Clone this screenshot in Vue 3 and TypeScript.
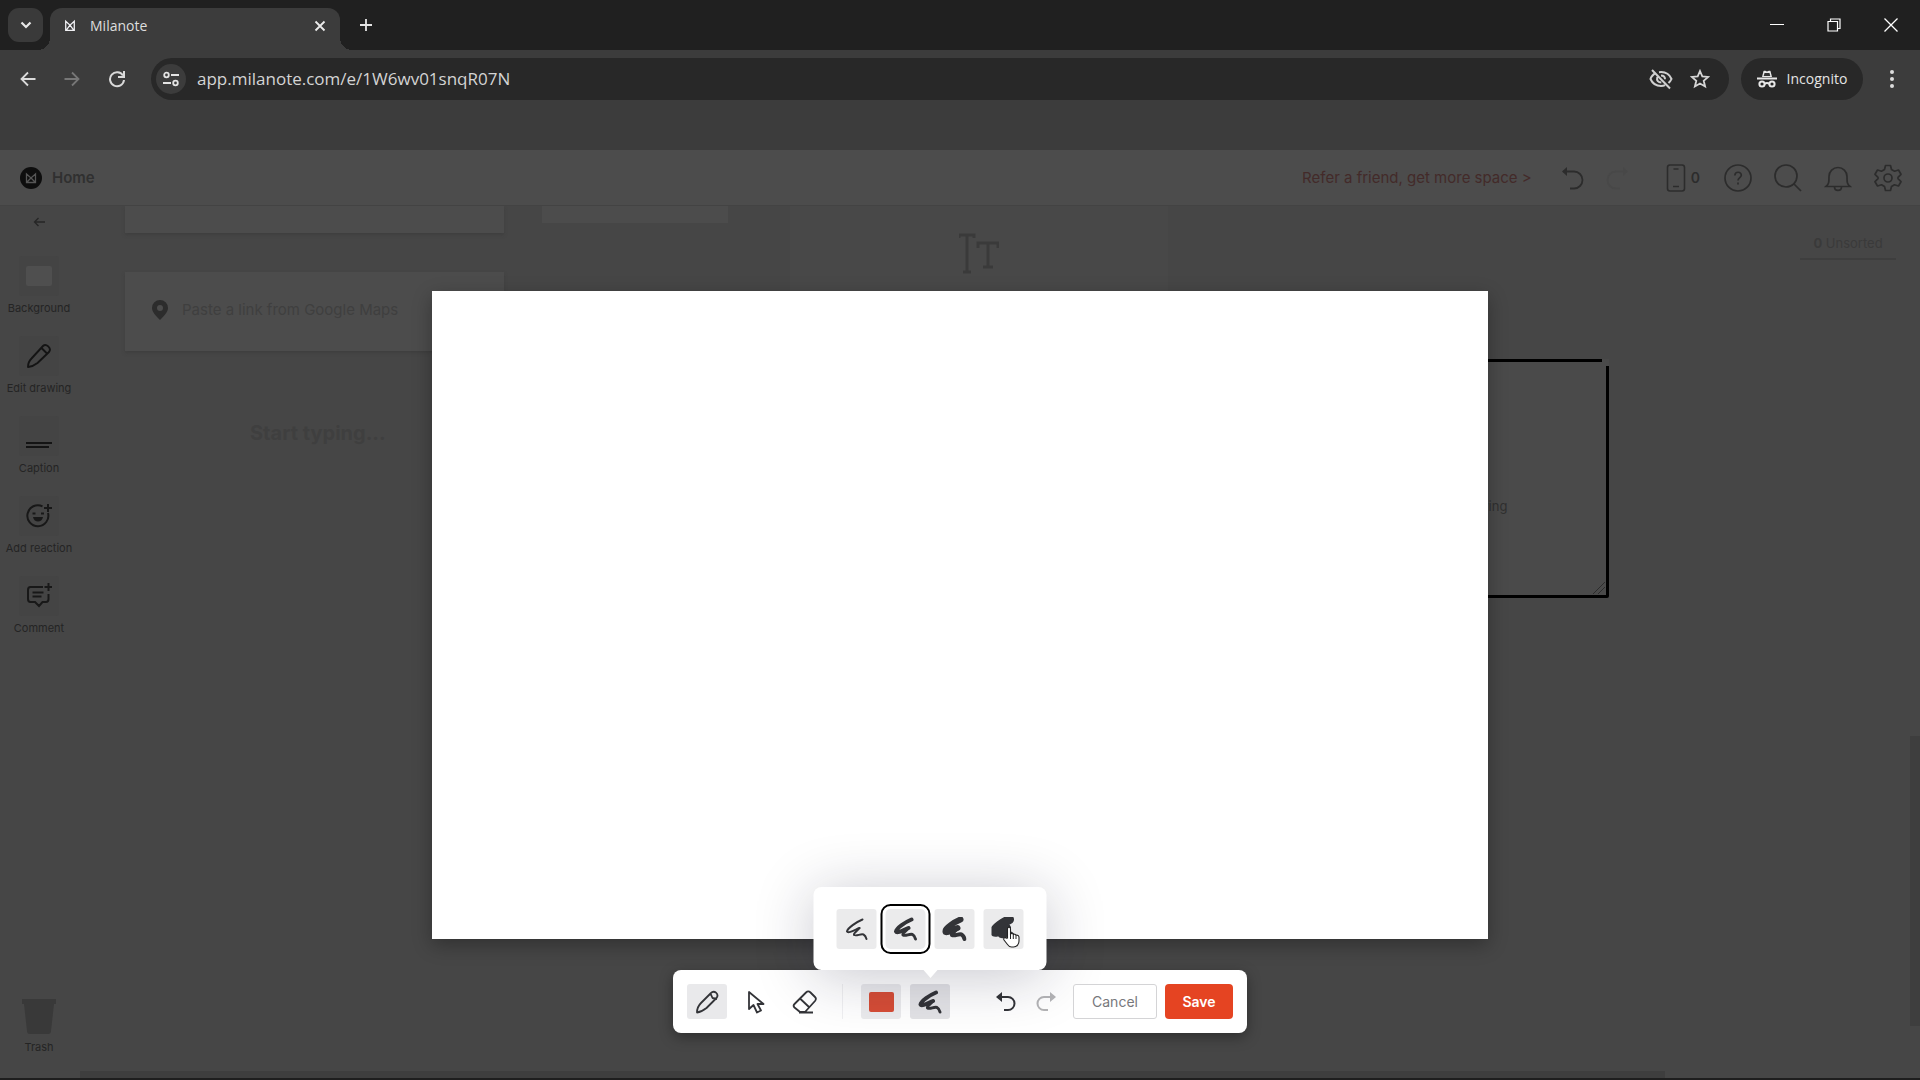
<script setup lang="ts">
import { ref } from 'vue'

interface StrokeSize {
  name: string
  main: number
  tail: number
}

const strokeSizes: StrokeSize[] = [
  { name: 'Thin', main: 2, tail: 2 },
  { name: 'Medium', main: 4, tail: 3 },
  { name: 'Thick', main: 6, tail: 4 },
  { name: 'Extra thick', main: 9, tail: 6 },
]

const strokeUpper = 'M18 2.500C12 5 3 11 2.500 14.500C3.500 17 11 12.500 15 11'
const strokeLower = 'M15 11C13 14 8.500 16 9.500 18C12 19.500 16 16.500 19 17.500C21 18.500 21.500 20 22 22'

const url = ref('app.milanote.com/e/1W6wv01snqR07N')
const selectedSize = ref('Medium')
const tool = ref('pencil')
</script>

<template>
  <div class="window">
    <header class="chrome">
      <div class="tabstrip">
        <button class="tab-search" aria-label="Search tabs">
          <svg width="12" height="8" viewBox="0 0 12 8"><path d="M1.5 1.5 6 6l4.500-4.500" stroke="#e8e8e8" stroke-width="2.200" fill="none" /></svg>
        </button>
        <div class="tab">
          <svg class="favicon" width="12" height="14" viewBox="0 0 14 14"><path d="M2 1.500 7 6l5-4.500V12H2ZM2.500 12 7 6l4.500 6" stroke="#f0f0f4" stroke-width="1.500" fill="none" /></svg>
          <span class="tab-title">Milanote</span>
          <button class="plain" aria-label="Close tab">
            <svg width="12" height="12" viewBox="0 0 12 12"><path d="m1.500 1.500 9 9m0-9-9 9" stroke="#ececec" stroke-width="1.800" /></svg>
          </button>
        </div>
        <button class="plain new-tab" aria-label="New tab">
          <svg width="14" height="14" viewBox="0 0 14 14"><path d="M7 1v12M1 7h12" stroke="#e4e4e4" stroke-width="1.800" /></svg>
        </button>
        <div class="window-controls">
          <button class="plain" aria-label="Minimize"><svg width="14" height="14" viewBox="0 0 14 14"><path d="M0 6.500h14" stroke="#fff" /></svg></button>
          <button class="plain" aria-label="Restore"><svg width="14" height="14" viewBox="0 0 14 14"><path d="M1 3.500h9.500V13H1zM3.500 3V1H13v9.500h-2" stroke="#fff" stroke-width="1.200" fill="none" /></svg></button>
          <button class="plain" aria-label="Close"><svg width="14" height="14" viewBox="0 0 14 14"><path d="m.5.5 13 13m0-13-13 13" stroke="#fff" stroke-width="1.300" /></svg></button>
        </div>
      </div>

      <div class="addressbar">
        <div class="nav">
          <button class="plain" aria-label="Back"><svg width="16" height="16" viewBox="0 0 16 16"><path d="M15.500 8H1.500M8 1.500 1.500 8 8 14.500" stroke="#dadada" stroke-width="1.800" fill="none" /></svg></button>
          <button class="plain" aria-label="Forward"><svg width="16" height="16" viewBox="0 0 16 16"><path d="M.5 8h14M8 1.500 14.500 8 8 14.500" stroke="#777" stroke-width="1.800" fill="none" /></svg></button>
          <button class="plain" aria-label="Reload"><svg width="18" height="18" viewBox="0 0 18 18"><path d="M15 5.500A7 7 0 1 0 16 10" stroke="#dadada" stroke-width="2" fill="none" /><path d="M16 1v6h-6" stroke="#dadada" stroke-width="2" fill="none" /></svg></button>
        </div>
        <div class="omnibox">
          <button class="site-info" aria-label="Site information">
            <svg width="16" height="16" viewBox="0 0 16 16" fill="none" stroke="#e4e4e4" stroke-width="1.800"><circle cx="3.500" cy="4" r="2.300" /><path d="M8 4h8M0 12h8" /><circle cx="12.500" cy="12" r="2.300" /></svg>
          </button>
          <input v-model="url" class="url" type="text" aria-label="Address" />
          <button class="plain" aria-label="Third-party cookies blocked">
            <svg width="24" height="22" viewBox="0 0 24 22" fill="none" stroke="#cfcfcf" stroke-width="2"><path d="M7 5C4 6.500 2 9 1.500 11c2 4.500 6 7 10.500 7 1.500 0 3-.3 4-.8M10 4.200c6-.8 10.500 2.300 12.500 6.800-.6 1.500-1.500 2.700-3 4M3 2l18 18.500M12 7.500c2.500 0 4 1.500 4 3.700M8.300 9c-1 3.500 1 5.500 4 5.500" /></svg>
          </button>
          <button class="plain" aria-label="Bookmark this tab">
            <svg width="20" height="20" viewBox="0 0 20 20"><path d="m10 2 2.300 5.400 5.900.5-4.500 3.900 1.400 5.700-5.100-3-5.100 3 1.400-5.700-4.500-3.900 5.900-.5Z" fill="none" stroke="#d6d6d6" stroke-width="1.800" /></svg>
          </button>
        </div>
        <button class="incognito">
          <svg width="20" height="18" viewBox="0 0 20 18"><path d="M5 7 6.500 1c2-.6 2.500.5 3.500.5S12 .4 13.500 1L15 7Z" fill="#e8e8e8" /><path d="M7.500 3h5l.8 3H6.700Z" fill="#333" /><path d="M0 8.500h20" stroke="#e8e8e8" stroke-width="2" /><g fill="none" stroke="#e8e8e8" stroke-width="2"><circle cx="5" cy="14" r="2.600" /><circle cx="15" cy="14" r="2.600" /><path d="M7.500 14c1.500-1.200 3.500-1.200 5 0" /></g></svg>
          <span>Incognito</span>
        </button>
        <button class="plain menu" aria-label="Chrome menu">
          <svg width="6" height="20" viewBox="0 0 6 20" fill="#dcdcdc"><circle cx="3" cy="3" r="2" /><circle cx="3" cy="10" r="2" /><circle cx="3" cy="17" r="2" /></svg>
        </button>
      </div>
    </header>

    <main class="app">
      <header class="app-header">
        <a class="home" href="#">
          <svg width="22" height="22" viewBox="0 0 22 22"><circle cx="11" cy="11" r="11" fill="#0e0e0e" /><path d="m6.500 7 4.500 4 4.500-4v8.500h-9Zm0 8.500L11 11l4.500 4.500" stroke="#565656" stroke-width="1.300" fill="none" /></svg>
          <span>Home</span>
        </a>
        <a class="refer" href="#">Refer a friend, get more space &gt;</a>
        <div class="header-icons">
          <button class="plain" aria-label="Undo"><svg width="24" height="26" viewBox="0 0 24 26" fill="none" stroke="#2c2c2c" stroke-width="1.800"><path d="M3 6.500h11a8.500 8.500 0 0 1 0 17h-4" /><path d="m7 2-5 4.500L7 11Z" fill="#2c2c2c" stroke="none" /></svg></button>
          <button class="plain" aria-label="Redo"><svg width="24" height="26" viewBox="0 0 24 26" fill="none" stroke="#484848" stroke-width="1.800"><path d="M21 6.500H10a8.500 8.500 0 0 0 0 17h4" /><path d="m17 2 5 4.500-5 4.500Z" fill="#484848" stroke="none" /></svg></button>
          <button class="plain phone">
            <svg width="20" height="28" viewBox="0 0 20 28" fill="none" stroke="#2c2c2c" stroke-width="1.600"><rect x="1.500" y="1" width="17" height="26" rx="2.500" /><path d="M7.500 5h5M7 22.500h6" /></svg>
            <span>0</span>
          </button>
          <button class="plain" aria-label="Help"><svg width="28" height="28" viewBox="0 0 28 28" fill="none" stroke="#2c2c2c" stroke-width="1.700"><circle cx="14" cy="14" r="13" /><path d="M10.800 11.500c.3-4.500 6.700-4 6.500-.3-.1 2.300-3.300 2.500-3.300 5.300M14 18.500v2" /></svg></button>
          <button class="plain" aria-label="Search"><svg width="28" height="28" viewBox="0 0 28 28" fill="none" stroke="#2c2c2c" stroke-width="1.700"><circle cx="12" cy="12" r="11" /><path d="m20 20 7 7" /></svg></button>
          <button class="plain" aria-label="Notifications"><svg width="28" height="28" viewBox="0 0 28 28" fill="none" stroke="#2c2c2c" stroke-width="1.700"><path d="M2 22.500c3-2.500 3-4 3-10a9 9 0 0 1 18 0c0 6 0 7.500 3 10ZM10.500 23c0 4.500 7 4.500 7 0" /></svg></button>
          <button class="plain" aria-label="Settings"><svg width="28" height="28" viewBox="0 0 28 28" fill="none" stroke="#2c2c2c" stroke-width="1.700" stroke-linejoin="round"><path d="M11.500 1.500h5l1 4 3 1.700 4-1.200 2.500 4.300-3 3v1.400l3 3-2.500 4.300-4-1.200-3 1.700-1 4h-5l-1-4-3-1.700-4 1.200L1 17.700l3-3v-1.400l-3-3L3.500 6l4 1.200 3-1.700Z" /><circle cx="14" cy="14" r="4" /></svg></button>
        </div>
      </header>

      <div class="workspace">
        <aside class="sidebar">
          <button class="plain back" aria-label="Back"><svg width="12" height="10" viewBox="0 0 12 10"><path d="M12 5H1.500M5.500 1l-4 4 4 4" stroke="#262626" stroke-width="1.400" fill="none" /></svg></button>
          <button class="side-item">
            <span class="side-icon"><i class="bg-swatch"></i></span>
            <span>Background</span>
          </button>
          <button class="side-item">
            <span class="side-icon"><svg width="26" height="26" viewBox="0 0 26 26" fill="none" stroke="#141414" stroke-width="1.900" stroke-linejoin="round"><path d="M2 24C2 20 4 17 5.500 15.500L17 3c3-3 9 2 6 6L11.500 20C9 22 6 23.500 2 24ZM15.500 5l5.500 5.500" /></svg></span>
            <span>Edit drawing</span>
          </button>
          <button class="side-item">
            <span class="side-icon"><svg width="26" height="26" viewBox="0 0 26 26" stroke="#141414" stroke-width="2"><path d="M0 20h26M0 24h23" /></svg></span>
            <span>Caption</span>
          </button>
          <button class="side-item">
            <span class="side-icon"><svg width="26" height="26" viewBox="0 0 26 26" fill="none" stroke="#181818" stroke-width="2"><path d="M16.500 3.300A10.500 10.500 0 1 0 22 10M22 1v8M18 5h8M6.500 10.500h3M15 10.500h3" /><path d="M7 14h10c-1 6-9 6-10 0Z" fill="#181818" stroke="none" /></svg></span>
            <span>Add reaction</span>
          </button>
          <button class="side-item">
            <span class="side-icon"><svg width="26" height="26" viewBox="0 0 26 26" fill="none" stroke="#181818" stroke-width="2"><path d="M17 4H4.500C2.500 4 2 5 2 7v9c0 2 1 3 2.500 3H9l4 4 3.500-4H20c1.500 0 2.500-1 2.500-3v-5M22.500 0v8M18.500 4h8M6.500 9.500h11M6.500 13.500h9" /></svg></span>
            <span>Comment</span>
          </button>
          <button class="side-item trash">
            <svg width="34" height="36" viewBox="0 0 34 36"><path d="M0 0h34v5h-2l-3 27c0 2-1 3-3 3H8c-2 0-3-1-3-3L2 5H0Z" fill="#393939" /></svg>
            <span>Trash</span>
          </button>
        </aside>

        <section class="board">
          <div class="card link-top"></div>
          <div class="card small-top"></div>
          <div class="card type-card">
            <svg width="40" height="42" viewBox="0 0 40 42" fill="none" stroke="#3a3a3a" stroke-width="3"><path d="M0 5V2h15v3M8 2v36M4 39h8M19 15v-5h20v5M29 10v23M24 34h10" /></svg>
          </div>
          <div class="card map-card">
            <svg width="16" height="20" viewBox="0 0 16 20"><path d="M8 0a8 8 0 0 1 8 8c0 4-4 8-8 12C4 16 0 12 0 8a8 8 0 0 1 8-8Zm0 5a3 3 0 1 0 0 6 3 3 0 0 0 0-6Z" fill="#2c2c2c" fill-rule="evenodd" /></svg>
            <span>Paste a link from Google Maps</span>
          </div>
          <div class="title-note">Start typing...</div>
          <div class="drawing-card">
            <span>Double click to start drawing</span>
            <svg class="resize" width="14" height="14" viewBox="0 0 14 14"><path d="M1 13 13 1M6 13l7-7" stroke="#2c2c2c" /></svg>
          </div>
          <div class="unsorted"><b>0</b> Unsorted</div>
          <div class="scroll-v"></div>
          <div class="scroll-h"></div>
        </section>
      </div>

      <div class="modal">
        <div class="paper"></div>
        <div class="toolbar">
          <div class="group">
            <button class="tool" :class="{ active: tool === 'pencil' }" aria-label="Pencil" @click="tool = 'pencil'">
              <svg width="24" height="24" viewBox="0 0 24 24" fill="none" stroke="#333438" stroke-width="1.800" stroke-linejoin="round"><path d="M2 22.500C2 18 4 15 6 13L16 3c3-3.500 8.500 1 5.500 5l-10 10c-2.500 2-5 4-9.500 4.500ZM15.500 3.500l2 4.500 4.500 1" /></svg>
            </button>
            <button class="tool" :class="{ active: tool === 'select' }" aria-label="Select" @click="tool = 'select'">
              <svg width="18" height="24" viewBox="0 0 18 24" fill="none" stroke="#333438" stroke-width="1.800" stroke-linejoin="round"><path d="M2 2v17l4.500-4 3.500 7.500 4-2-3.500-6.500h6Z" /></svg>
            </button>
            <button class="tool" :class="{ active: tool === 'eraser' }" aria-label="Eraser" @click="tool = 'eraser'">
              <svg width="26" height="24" viewBox="0 0 26 24" fill="none" stroke="#333438" stroke-width="1.800" stroke-linejoin="round"><path d="M8 22 2.500 17.500c-1-1-1-2.500 0-3.500L14 2.500c1.500-1.500 3-1.500 4.500 0L23 7c1.200 1.200 1.200 2.500 0 4L13 22ZM8 8.500l9.500 9M7 22.500h14" /></svg>
            </button>
          </div>
          <span class="divider"></span>
          <div class="group">
            <button class="tool shade" aria-label="Colour"><i class="colour"></i></button>
            <div class="stroke-anchor">
              <button class="tool pressed" aria-label="Stroke size" aria-expanded="true">
                <svg width="24" height="24" viewBox="0 0 24 24" fill="none" stroke="#333438" stroke-linecap="round" stroke-linejoin="round"><path :d="strokeUpper" stroke-width="4" /><path :d="strokeLower" stroke-width="3" /></svg>
              </button>
              <div class="popover">
                <button
                  v-for="s in strokeSizes"
                  :key="s.name"
                  class="size"
                  :class="{ selected: selectedSize === s.name }"
                  :aria-label="s.name"
                  :aria-pressed="selectedSize === s.name"
                  @click="selectedSize = s.name"
                >
                  <svg width="24" height="24" viewBox="0 0 24 24" fill="none" stroke="#333438" stroke-linecap="round" stroke-linejoin="round"><path :d="strokeUpper" :stroke-width="s.main" /><path :d="strokeLower" :stroke-width="s.tail" /></svg>
                </button>
                <svg class="pointer" width="18" height="22" viewBox="0 0 18 22"><path d="M5 12V3c0-2.500 3-2.500 3 0v5c1-1 2.500-.6 2.800.5 1-.6 2.400-.2 2.700.8 1.500-.5 3 .2 3 2V15c0 3-2 6-5.500 6H9c-2 0-3-1-4-2.500L1.500 14c-1-2 1.200-3 2.300-1.800Z" fill="#fff" stroke="#222" stroke-width="1.100" /><path d="M8 8v5M10.800 9v4M13.500 9.500V13" stroke="#222" /></svg>
              </div>
            </div>
          </div>
          <div class="history">
            <button class="tool" aria-label="Undo"><svg width="22" height="22" viewBox="0 0 22 22" fill="none" stroke="#333438" stroke-width="2"><path d="M4 6h9a6.500 6.500 0 0 1 0 13H9" /><path d="M7 1 1 6l6 5Z" fill="#333438" stroke="none" /></svg></button>
            <button class="tool" aria-label="Redo" disabled><svg width="22" height="22" viewBox="0 0 22 22" fill="none" stroke="#b4b4b6" stroke-width="2"><path d="M18 6H9a6.500 6.500 0 0 0 0 13h4" /><path d="m15 1 6 5-6 5Z" fill="#b4b4b6" stroke="none" /></svg></button>
          </div>
          <div class="actions">
            <button class="cancel">Cancel</button>
            <button class="save">Save</button>
          </div>
        </div>
      </div>
    </main>
  </div>
</template>

<style>
body {
  margin: 0;
  background: #464646;
}
</style>

<style scoped>
* {
  box-sizing: border-box;
}
button {
  border: 0;
  padding: 0;
  margin: 0;
  font: inherit;
  color: inherit;
  background: none;
}
svg {
  display: block;
  flex: none;
}
.window {
  display: flex;
  flex-direction: column;
  min-height: 100vh;
  font-family: Inter, "Liberation Sans", sans-serif;
}
.plain {
  display: flex;
  align-items: center;
  justify-content: center;
}

/* browser frame */
.chrome {
  height: 150px;
  background: #3c3c3c;
  font-family: "Open Sans", "Noto Sans", sans-serif;
}
.tabstrip {
  display: flex;
  align-items: flex-end;
  height: 50px;
  background: #202020;
}
.tab-search {
  display: flex;
  align-items: center;
  justify-content: center;
  width: 35px;
  height: 34px;
  margin: 0 7px 8px 8px;
  border-radius: 11px;
  background: #3a3a3a;
}
.tab {
  position: relative;
  display: flex;
  align-items: center;
  width: 290px;
  height: 42px;
  padding: 0 14px 7px;
  border-radius: 12px 12px 0 0;
  background: #3c3c3c;
}
.tab::before,
.tab::after {
  content: "";
  position: absolute;
  bottom: 0;
  width: 12px;
  height: 12px;
}
.tab::before {
  right: 100%;
  background: radial-gradient(circle at 0 0, transparent 12px, #3c3c3c 12px);
}
.tab::after {
  left: 100%;
  background: radial-gradient(circle at 100% 0, transparent 12px, #3c3c3c 12px);
}
.tab-title {
  flex: 1;
  margin-left: 14px;
  font-size: 14px;
  line-height: 20px;
  color: #dedede;
}
.new-tab {
  width: 28px;
  height: 34px;
  margin: 0 0 8px 12px;
}
.window-controls {
  display: flex;
  gap: 43px;
  margin: 0 22px 18px auto;
}
.addressbar {
  display: flex;
  align-items: center;
  height: 57px;
  padding: 0 25px 0 20px;
}
.nav {
  display: flex;
  gap: 28px;
  width: 131px;
}
.omnibox {
  display: flex;
  flex: 1;
  align-items: center;
  gap: 17px;
  height: 42px;
  padding: 0 19px 0 5px;
  border-radius: 21px;
  background: #282828;
}
.site-info {
  display: flex;
  align-items: center;
  justify-content: center;
  width: 30px;
  height: 30px;
  border-radius: 15px;
  background: #3c3c3c;
}
.url {
  flex: 1;
  min-width: 0;
  height: 30px;
  margin-left: -6px;
  padding: 0;
  border: 0;
  outline: 0;
  background: none;
  font-family: inherit;
  font-size: 17px;
  color: #d4d4d4;
}
.incognito {
  display: flex;
  align-items: center;
  justify-content: center;
  gap: 10px;
  width: 122px;
  height: 42px;
  margin: 0 26px 0 12px;
  border-radius: 21px;
  background: #282828;
  font-size: 14px;
  color: #e4e4e4;
}

/* dimmed application */
.app {
  position: relative;
  display: flex;
  flex: 1;
  flex-direction: column;
  border-bottom: 2px solid #1e1e1e;
  background: #464646;
}
.app-header {
  display: flex;
  align-items: center;
  height: 56px;
  padding: 0 18px 0 20px;
  border-bottom: 1px solid #434343;
  background: #4c4c4c;
}
.home {
  display: flex;
  align-items: center;
  gap: 10px;
  font-size: 15px;
  font-weight: 600;
  color: #303030;
  text-decoration: none;
}
.refer {
  margin-left: auto;
  font-size: 15px;
  color: #432a29;
  text-decoration: none;
}
.header-icons {
  display: flex;
  align-items: center;
  gap: 22px;
  margin-left: 28px;
}
.phone {
  gap: 5px;
  margin: 0 2px 0 14px;
  font-size: 14px;
  font-weight: 600;
  color: #2c2c2c;
}
.workspace {
  display: flex;
  flex: 1;
}
.sidebar {
  display: flex;
  flex-direction: column;
  align-items: center;
  gap: 20px;
  width: 80px;
  padding: 6px 2px 23px 0;
}
.back {
  height: 20px;
  margin-bottom: 4px;
}
.side-item {
  display: flex;
  flex-direction: column;
  align-items: center;
  gap: 4px;
  font-size: 11px;
  line-height: 16px;
  white-space: nowrap;
  color: #242424;
}
.side-icon {
  display: flex;
  align-items: center;
  justify-content: center;
  width: 40px;
  height: 40px;
  border-radius: 3px;
  background: #444;
}
.bg-swatch {
  width: 26px;
  height: 20px;
  border-radius: 2px;
  background: #4f4f4f;
}
.trash {
  margin-top: auto;
}
.board {
  position: relative;
  flex: 1;
  overflow: hidden;
}
.card {
  position: absolute;
  background: #4c4c4c;
  box-shadow: 0 2px 3px #3f3f3f;
}
.link-top {
  left: 45px;
  top: 0;
  width: 379px;
  height: 27px;
}
.small-top {
  left: 462px;
  top: 0;
  width: 186px;
  height: 17px;
  box-shadow: none;
}
.type-card {
  display: flex;
  justify-content: center;
  left: 710px;
  top: 0;
  width: 378px;
  height: 240px;
  padding-top: 27px;
  background: #484848;
  box-shadow: none;
}
.map-card {
  display: flex;
  align-items: center;
  gap: 14px;
  left: 45px;
  top: 66px;
  width: 379px;
  height: 79px;
  padding: 0 27px 4px;
  font-size: 15px;
  color: #3f3f3f;
}
.title-note {
  position: absolute;
  left: 170px;
  top: 213px;
  font-size: 20px;
  font-weight: 700;
  line-height: 28px;
  color: #3f3f3f;
}
.drawing-card {
  position: absolute;
  display: flex;
  align-items: center;
  justify-content: center;
  left: 1150px;
  top: 153px;
  width: 379px;
  height: 239px;
  padding-top: 54px;
  border: 3px solid #000;
  border-radius: 2px;
  background: #4a4a4a;
  font-size: 13px;
  color: #303030;
}
.drawing-card::before {
  content: "";
  position: absolute;
  top: -3px;
  right: -3px;
  width: 7px;
  height: 7px;
  background: #4a4a4a;
}
.resize {
  position: absolute;
  right: 0;
  bottom: 0;
}
.unsorted {
  position: absolute;
  right: 24px;
  top: 23px;
  width: 96px;
  height: 31px;
  border-bottom: 2px solid #3e3e3e;
  font-size: 13px;
  line-height: 28px;
  text-align: center;
  color: #3a3a3a;
}
.scroll-v {
  position: absolute;
  right: 0;
  top: 530px;
  bottom: 52px;
  width: 10px;
  background: #3e3e3e;
}
.scroll-h {
  position: absolute;
  left: 0;
  right: 255px;
  bottom: 0;
  height: 7px;
  background: #3e3e3e;
}

/* drawing editor */
.modal {
  position: absolute;
  inset: 0 0 -2px;
  display: flex;
  align-items: center;
  justify-content: center;
}
.paper {
  width: 55%;
  height: 60vh;
  background: #fff;
  box-shadow: 0 6px 18px rgba(0, 0, 0, 0.3);
}
.toolbar {
  position: absolute;
  bottom: 47px;
  left: 50%;
  display: flex;
  align-items: center;
  padding: 14px;
  border-radius: 8px;
  background: #fff;
  box-shadow: 0 4px 14px rgba(0, 0, 0, 0.35);
  transform: translateX(-50%);
}
.group {
  display: flex;
  gap: 9px;
}
.tool {
  display: flex;
  align-items: center;
  justify-content: center;
  width: 40px;
  height: 35px;
  border-radius: 3px;
}
.active {
  background: #e9e9eb;
}
.shade {
  background: #ebebed;
}
.pressed {
  background: #e3e3e6;
}
.divider {
  width: 1px;
  height: 35px;
  margin: 0 18px 0 17px;
  background: #f0f0f2;
}
.colour {
  width: 25px;
  height: 20px;
  border-radius: 2px;
  background: #d64d36;
}
.stroke-anchor {
  position: relative;
}
.popover {
  position: absolute;
  z-index: 1;
  bottom: 49px;
  left: 50%;
  display: flex;
  gap: 9px;
  padding: 22px 23px 21px;
  border-radius: 8px;
  background: #fff;
  box-shadow: 0 6px 60px rgba(20, 20, 50, 0.24);
  transform: translateX(-50%);
}
.popover::after {
  content: "";
  position: absolute;
  top: 100%;
  left: 50%;
  border: 7px solid transparent;
  border-top: 8px solid #fff;
  border-bottom: 0;
  transform: translateX(-50%);
}
.size {
  display: flex;
  align-items: center;
  justify-content: center;
  width: 40px;
  height: 40px;
  border-radius: 3px;
  background: #ebebec;
}
.selected {
  outline: 2px solid #000;
  outline-offset: 3px;
  border-radius: 5px;
}
.pointer {
  position: absolute;
  right: 26px;
  bottom: 22px;
}
.history {
  display: flex;
  margin-left: 36px;
}
.actions {
  position: relative;
  z-index: 2;
  display: flex;
  gap: 8px;
  margin-left: 7px;
  font-size: 14px;
}
.cancel {
  width: 84px;
  height: 35px;
  border: 1px solid #d4d4d6;
  border-radius: 3px;
  background: #fff;
  color: #77787c;
}
.save {
  width: 68px;
  height: 35px;
  border-radius: 4px;
  background: #e54422;
  font-weight: 600;
  color: #fff;
}
</style>
